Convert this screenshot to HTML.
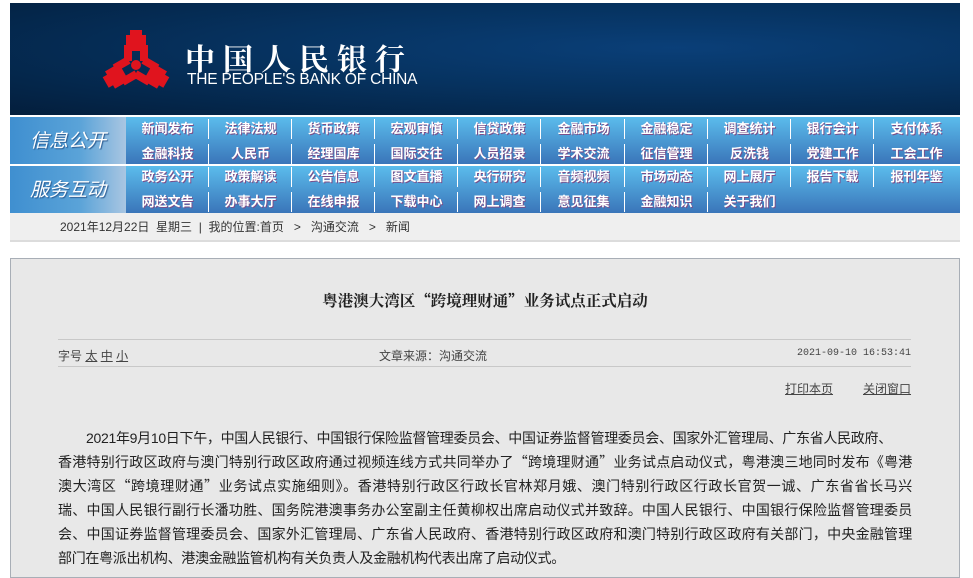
<!DOCTYPE html>
<html><head><meta charset="utf-8"><style>
*{margin:0;padding:0;box-sizing:border-box}
body{width:973px;height:570px;overflow:hidden;background:#fff;font-family:"Liberation Sans","Noto Sans CJK SC",sans-serif;position:relative}
#hd{position:absolute;left:10px;top:3px;width:950px;height:112px;background:radial-gradient(ellipse at 70% 40%,#0a3f78 0%,#06325f 45%,#031e3c 100%);overflow:hidden}
#hd .cn{position:absolute;left:175px;top:32px;color:#fff;font-size:30px;font-family:"Noto Serif CJK SC","Noto Sans CJK SC",serif;letter-spacing:8px;font-weight:bold}
#hd .en{position:absolute;left:177px;top:68px;color:#fff;font-size:15.5px;letter-spacing:-0.2px}
.nav{position:absolute;left:10px;width:950px;height:47px;background:linear-gradient(#5bbcec,#3a75b9)}
.lab{position:absolute;left:0;top:0;width:116px;height:47px;background:linear-gradient(90deg,#3f8fd0 0%,#5aa3d8 60%,#a9c6e2 100%);color:#fff;font-style:italic;font-size:19px;font-family:"Noto Sans CJK SC",sans-serif;text-align:center;line-height:45px;text-shadow:1px 1px 1px #2a5a90}
.c{position:absolute;width:83px;height:24px;color:#fff;font-weight:bold;font-size:13px;text-align:center;line-height:22px;font-family:"Noto Sans CJK SC",sans-serif;text-shadow:1px 1px 0 #7a4f8a}
.c.s:after{content:"";position:absolute;right:0;top:2px;height:20px;border-right:1px solid #fff}
#bc{position:absolute;left:10px;top:213px;width:950px;height:29px;background:#efefef;border-bottom:2px solid #dcdcdc;font-size:12px;color:#333;line-height:29px;padding-left:50px}
#pn{position:absolute;left:10px;top:258px;width:950px;height:320px;background:#e8e8e8;border:1px solid #a8aeb6}
.t{position:absolute;left:0;width:948px;top:30px;text-align:center;font-size:15.5px;font-weight:bold;color:#222;font-family:"Noto Serif CJK SC",serif}
.ln{position:absolute;left:47px;width:853px;border-top:1px solid #c8c8c8}
.sm{position:absolute;font-size:12px;color:#444}
.p{position:absolute;left:47px;top:167px;width:854px;font-size:14px;line-height:24px;color:#222;letter-spacing:-0.3px}
.p div{text-align:justify;text-align-last:justify;white-space:nowrap;height:24px}
.p div.l{text-align-last:left}
.q{font-family:"Noto Sans CJK SC",sans-serif}
</style></head><body>
<div id="hd">
<svg style="position:absolute;left:88px;top:26px" width="76" height="68" viewBox="-38 -36 76 68">
<g fill="#e0141e">
<g id="a"><path d="M-6,-35H6V-30H10V-20H12V-4H4V-14H-4V-4H-12V-20H-10V-30H-6Z"/></g>
<use href="#a" transform="rotate(120)"/>
<use href="#a" transform="rotate(240)"/>
<circle r="5"/>
</g>
</svg>
<div class="cn">中国人民银行</div>
<div class="en">THE PEOPLE'S BANK OF CHINA</div>
</div>

<div class="nav" style="top:117px"><div class="lab">信息公开</div>
<div class="c s" style="left:116px;top:0">新闻发布</div><div class="c s" style="left:199px;top:0">法律法规</div><div class="c s" style="left:282px;top:0">货币政策</div><div class="c s" style="left:365px;top:0">宏观审慎</div><div class="c s" style="left:448px;top:0">信贷政策</div><div class="c s" style="left:532px;top:0">金融市场</div><div class="c s" style="left:615px;top:0">金融稳定</div><div class="c s" style="left:698px;top:0">调查统计</div><div class="c s" style="left:781px;top:0">银行会计</div><div class="c" style="left:865px;top:0">支付体系</div>
<div class="c s" style="left:116px;top:25px">金融科技</div><div class="c s" style="left:199px;top:25px">人民币</div><div class="c s" style="left:282px;top:25px">经理国库</div><div class="c s" style="left:365px;top:25px">国际交往</div><div class="c s" style="left:448px;top:25px">人员招录</div><div class="c s" style="left:532px;top:25px">学术交流</div><div class="c s" style="left:615px;top:25px">征信管理</div><div class="c s" style="left:698px;top:25px">反洗钱</div><div class="c s" style="left:781px;top:25px">党建工作</div><div class="c" style="left:865px;top:25px">工会工作</div>
</div>
<div class="nav" style="top:166px"><div class="lab">服务互动</div>
<div class="c s" style="left:116px;top:-1px">政务公开</div><div class="c s" style="left:199px;top:-1px">政策解读</div><div class="c s" style="left:282px;top:-1px">公告信息</div><div class="c s" style="left:365px;top:-1px">图文直播</div><div class="c s" style="left:448px;top:-1px">央行研究</div><div class="c s" style="left:532px;top:-1px">音频视频</div><div class="c s" style="left:615px;top:-1px">市场动态</div><div class="c s" style="left:698px;top:-1px">网上展厅</div><div class="c s" style="left:781px;top:-1px">报告下载</div><div class="c" style="left:865px;top:-1px">报刊年鉴</div>
<div class="c s" style="left:116px;top:24px">网送文告</div><div class="c s" style="left:199px;top:24px">办事大厅</div><div class="c s" style="left:282px;top:24px">在线申报</div><div class="c s" style="left:365px;top:24px">下载中心</div><div class="c s" style="left:448px;top:24px">网上调查</div><div class="c s" style="left:532px;top:24px">意见征集</div><div class="c s" style="left:615px;top:24px">金融知识</div><div class="c" style="left:698px;top:24px">关于我们</div>
</div>

<div id="bc">2021年12月22日&nbsp; 星期三 &nbsp;|&nbsp; 我的位置:首页 &nbsp;&nbsp;&gt;&nbsp;&nbsp; 沟通交流 &nbsp;&nbsp;&gt;&nbsp;&nbsp; 新闻</div>

<div id="pn">
<div class="t">粤港澳大湾区<span class="q">“</span>跨境理财通<span class="q">”</span>业务试点正式启动</div>
<div class="ln" style="top:80px"></div>
<div class="sm" style="left:47px;top:88px">字号 <u>太</u> <u>中</u> <u>小</u></div>
<div class="sm" style="left:368px;top:88px">文章来源：沟通交流</div>
<div class="sm" style="right:48px;top:89px;font-family:'Liberation Mono',monospace;font-size:10px">2021-09-10 16:53:41</div>
<div class="ln" style="top:107px"></div>
<div class="sm" style="left:774px;top:121px"><u>打印本页</u></div>
<div class="sm" style="left:852px;top:121px"><u>关闭窗口</u></div>
<div class="p">
<div style="padding-left:28px;text-align-last:left">2021年9月10日下午，中国人民银行、中国银行保险监督管理委员会、中国证券监督管理委员会、国家外汇管理局、广东省人民政府、</div>
<div>香港特别行政区政府与澳门特别行政区政府通过视频连线方式共同举办了<span class="q">“</span>跨境理财通<span class="q">”</span>业务试点启动仪式，粤港澳三地同时发布《粤港</div>
<div>澳大湾区<span class="q">“</span>跨境理财通<span class="q">”</span>业务试点实施细则》。香港特别行政区行政长官林郑月娥、澳门特别行政区行政长官贺一诚、广东省省长马兴</div>
<div>瑞、中国人民银行副行长潘功胜、国务院港澳事务办公室副主任黄柳权出席启动仪式并致辞。中国人民银行、中国银行保险监督管理委员</div>
<div>会、中国证券监督管理委员会、国家外汇管理局、广东省人民政府、香港特别行政区政府和澳门特别行政区政府有关部门，中央金融管理</div>
<div class="l">部门在粤派出机构、港澳金融监管机构有关负责人及金融机构代表出席了启动仪式。</div>
</div>
</div>
</body></html>
